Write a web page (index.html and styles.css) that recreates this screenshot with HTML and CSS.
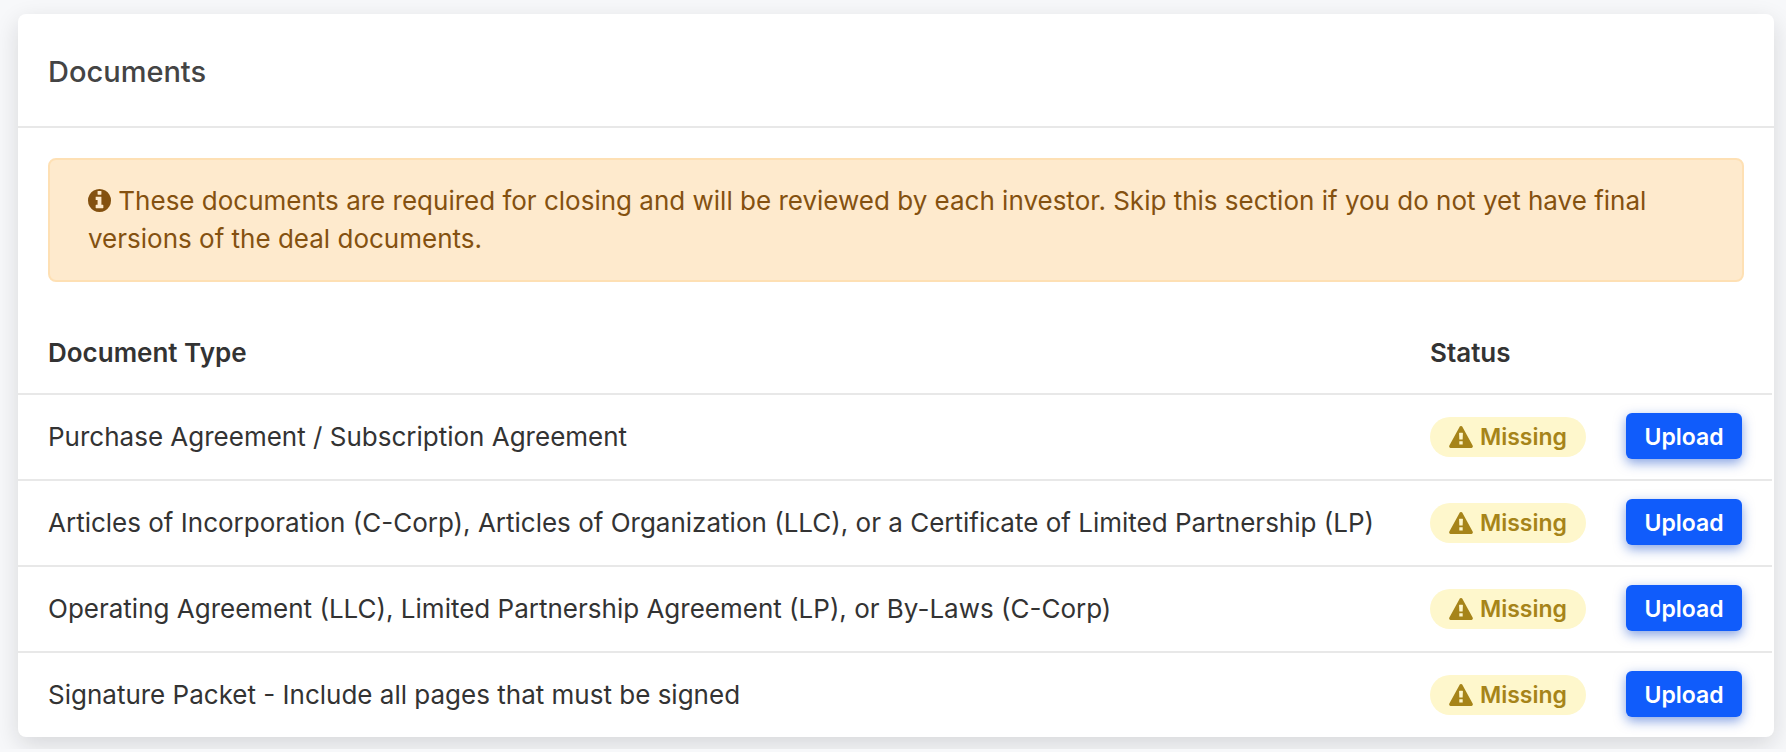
FILE: index.html
```html
<!DOCTYPE html>
<html lang="en">
<head>
<meta charset="utf-8">
<meta name="viewport" content="width=device-width, initial-scale=1">
<title>Documents</title>
<link rel="stylesheet" href="styles.css">
</head>
<body>
<svg class="sprite" aria-hidden="true">
  <symbol id="icon-info" viewBox="0 128 1536 1536">
    <path d="M1024 1376v-160q0-14-9-23t-23-9h-96v-512q0-14-9-23t-23-9h-320q-14 0-23 9t-9 23v160q0 14 9 23t23 9h96v320h-96q-14 0-23 9t-9 23v160q0 14 9 23t23 9h448q14 0 23-9t9-23zm-128-896v-192q0-14-9-23t-23-9h-192q-14 0-23 9t-9 23v192q0 14 9 23t23 9h192q14 0 23-9t9-23zm640 416q0 209-103 385.5t-279.5 279.5-385.5 103-385.5-103-279.5-279.5-103-385.5 103-385.5 279.5-279.5 385.5-103 385.5 103 279.5 279.5 103 385.5z"/>
  </symbol>
  <symbol id="icon-warning" viewBox="0 0 1792 1664">
    <path d="M1024 1375v-190q0-14-9.5-23.5t-22.5-9.5h-192q-13 0-22.5 9.5t-9.5 23.5v190q0 14 9.5 23.5t22.5 9.5h192q13 0 22.5-9.5t9.5-23.5zm-2-374l18-459q0-12-10-19-13-11-24-11h-220q-11 0-24 11-10 7-10 21l17 457q0 10 10 16.5t24 6.5h185q14 0 23.5-6.5t10.5-16.5zm-14-934l768 1408q35 63-2 126-17 29-46.5 46t-63.5 17h-1536q-34 0-63.5-17t-46.5-46q-37-63-2-126l768-1408q17-31 47-49t65-18 65 18 47 49z"/>
  </symbol>
</svg>
<main class="card">
  <header class="card-header">
    <h1 class="card-title">Documents</h1>
  </header>
  <p class="alert"><svg class="icon icon-info" aria-hidden="true"><use href="#icon-info"/></svg> These documents are required for closing and will be reviewed by each investor. Skip this section if you do not yet have final versions of the deal documents.</p>
  <table class="documents">
    <thead>
      <tr><th scope="col">Document Type</th><th scope="col" class="status-col">Status</th><td class="action-col"></td></tr>
    </thead>
    <tbody>
      <tr>
        <td>Purchase Agreement / Subscription Agreement</td>
        <td><span class="badge"><svg class="icon icon-warning" aria-hidden="true"><use href="#icon-warning"/></svg>Missing</span></td>
        <td><button type="button" class="upload">Upload</button></td>
      </tr>
      <tr>
        <td>Articles of Incorporation (C-Corp), Articles of Organization (LLC), or a Certificate of Limited Partnership (LP)</td>
        <td><span class="badge"><svg class="icon icon-warning" aria-hidden="true"><use href="#icon-warning"/></svg>Missing</span></td>
        <td><button type="button" class="upload">Upload</button></td>
      </tr>
      <tr>
        <td>Operating Agreement (LLC), Limited Partnership Agreement (LP), or By-Laws (C-Corp)</td>
        <td><span class="badge"><svg class="icon icon-warning" aria-hidden="true"><use href="#icon-warning"/></svg>Missing</span></td>
        <td><button type="button" class="upload">Upload</button></td>
      </tr>
      <tr>
        <td>Signature Packet - Include all pages that must be signed</td>
        <td><span class="badge"><svg class="icon icon-warning" aria-hidden="true"><use href="#icon-warning"/></svg>Missing</span></td>
        <td><button type="button" class="upload">Upload</button></td>
      </tr>
    </tbody>
  </table>
</main>
</body>
</html>
```
FILE: styles.css
```css
* {
  box-sizing: border-box;
}

body {
  margin: 0;
  padding: 14px 12px 12px 18px;
  background: #f7f8fa;
  color: #333;
  font-family: Inter, "Liberation Sans", sans-serif;
  font-size: 26px;
  line-height: 38px;
}

.sprite {
  display: none;
}

.icon {
  fill: currentColor;
}

.card {
  background: #fff;
  border-radius: 8px;
  box-shadow: 0 8px 24px rgba(20, 22, 25, 0.14);
}

.card-header {
  padding: 39px 30px 35px;
  border-bottom: 2px solid #e8e8e8;
}

.card-title {
  margin: 0;
  color: #444;
  font-size: 29px;
  font-weight: 500;
  line-height: 38px;
}

.alert {
  margin: 30px;
  padding: 22px 38px;
  border: 2px solid #fee0b4;
  border-radius: 8px;
  background: #feeacd;
  color: #845110;
}

.icon-info {
  width: 23px;
  height: 23px;
  vertical-align: -2px;
}

.documents {
  width: calc(100% - 2px);
  border-collapse: separate;
  border-spacing: 0;
}

.documents th,
.documents td {
  padding: 18px 30px;
  text-align: left;
  vertical-align: middle;
}

.documents th {
  padding-top: 22px;
  padding-bottom: 21px;
  font-weight: 600;
}

.documents tbody td {
  height: 86px;
  border-top: 2px solid #e8e8e8;
}

.documents .status-col {
  width: 196px;
}

.documents .action-col {
  width: 146px;
}

.documents th + th,
.documents td + td,
.documents th + td {
  padding-left: 0;
}

.badge {
  display: flex;
  align-items: center;
  justify-content: center;
  gap: 7px;
  width: 156px;
  height: 40px;
  border-radius: 20px;
  background: #fef7cc;
  color: #a68419;
  font-size: 23px;
  font-weight: 600;
}

.icon-warning {
  width: 24px;
  height: 22px;
}

.documents td:nth-child(2) {
  padding-right: 40px;
}

.upload {
  display: block;
  width: 116px;
  height: 46px;
  margin: 0 0 2px;
  padding: 2px 0 0;
  border: 0;
  border-radius: 6px;
  background: #105cfb;
  box-shadow: 0 4px 12px rgba(16, 72, 200, 0.5);
  color: #fff;
  font: 600 23px/44px Inter, "Liberation Sans", sans-serif;
}
```
